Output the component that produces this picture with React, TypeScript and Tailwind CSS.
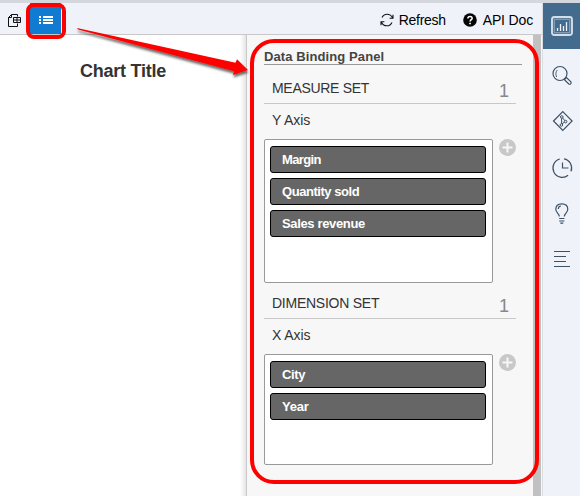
import React from 'react';

const font = "font-['Liberation_Sans',Arial,sans-serif]";

function Plus() {
  return (
    <svg width="17" height="17" viewBox="0 0 17 17" className="shrink-0">
      <circle cx="8.5" cy="8.5" r="8.5" fill="#c8c8c8" />
      <path d="M8.5 3.5v10M3.5 8.5h10" stroke="#f7f7f7" strokeWidth="2" />
    </svg>
  );
}

interface SetProps {
  title: string;
  titleClass: string;
  axis: string;
  items: { label: string; cls: string }[];
  boxClass: string;
}

function BindingSet({ title, titleClass, axis, items, boxClass }: SetProps) {
  return (
    <section className="w-[252px]">
      <div className="flex h-[31px] justify-between border-b border-[#c8c8c8] pl-2 pr-[7px]">
        <h3 className={`text-[14px] leading-[30px] text-[#333] ${titleClass}`}>{title}</h3>
        <span className="text-[18px] leading-[36px] text-[#888]">1</span>
      </div>
      <div className="h-[35px] pl-2 text-[14px] leading-[32px] tracking-[-0.1px] text-[#333]">{axis}</div>
      <div className="flex gap-[6px]">
        <div className={`flex w-[229px] flex-col gap-[5px] rounded-[2px] border border-[#999] bg-white pl-[5px] pt-1.5 ${boxClass}`}>
          {items.map((item) => (
            <div
              key={item.label}
              className={`h-[27px] w-[216px] rounded-[3px] border border-black bg-[#666] pl-[11px] text-[13px] font-bold leading-[26px] text-white ${item.cls}`}
            >
              {item.label}
            </div>
          ))}
        </div>
        <Plus />
      </div>
    </section>
  );
}

function Sidebar() {
  return (
    <aside className="flex w-[38px] shrink-0 flex-col border-l border-[#d9dde2] bg-[#eff3f9]">
      <div className="h-[46px] bg-[#426b8e]">
        <svg width="37" height="46" viewBox="543 3 37 46" fill="none">
          <rect x="552" y="17" width="20" height="18" rx="2.5" stroke="#d5dee7" strokeWidth="1.9" />
          <rect x="554.2" y="19.2" width="15.6" height="13.6" rx="1" stroke="#a9bccd" strokeWidth="0.9" />
          <path d="M557.5 31v-3M560.5 31v-7M563.5 31v-5M566.5 31v-9" stroke="#eff3f9" strokeWidth="1.3" />
        </svg>
      </div>
      <svg width="37" height="447" viewBox="543 49 37 447" fill="none" stroke="#3d5064" strokeWidth="1.2">
        <circle cx="560" cy="73.5" r="7" />
        <path d="M556.6 77c-1.4-3-.7-5.5.8-7" strokeWidth="0.9" />
        <path d="m565.2 78.8 1.3-1.2 4.4 4.2c.8 1.6-.6 3-2.1 2.2l-4.4-4.3z" />
        <path d="m562.8 111.7 9.3 9.3-9.3 9.3-9.3-9.3z" />
        <g strokeWidth="1">
          <circle cx="561.8" cy="117" r="1.3" />
          <circle cx="565.6" cy="121.6" r="1.3" />
          <circle cx="561.4" cy="125" r="1.3" />
          <path d="M561.6 118.3v5.4M562.6 118l2.2 2.6M562 124l2.5-2" />
        </g>
        <path d="M559.8 159a9.3 9.3 0 1 0 8.3 16.2M564 158.8a9.3 9.3 0 0 1 7 12.6" />
        <path d="M562.5 162.5v5.5h6" />
        <path d="M559.3 216.5c0-3.2-3.5-3.8-3.5-7.3 0-3.4 2.6-5.4 6-5.4s6 2 6 5.4c0 3.5-3.5 4.1-3.5 7.3M558.3 209c0-1.7.9-2.8 2.6-3M559.2 218.5h5.2M559.2 221h5.2M560.3 223.2h3" />
        <path d="M554 251.5h16M554 256.5h12M554 261.5h12M554 266.5h16" />
      </svg>
    </aside>
  );
}

export default function App() {
  return (
    <div className={`relative flex h-[496px] w-[580px] flex-col overflow-hidden bg-white ${font}`}>
      <div className="h-[3px] shrink-0 bg-[#d4d8de]" />
      <div className="flex h-[493px]">
        <main className="flex w-[542px] flex-col">
          <header className="flex h-8 shrink-0 border-b border-[#c8c8c8] bg-[#eff3f9] text-[14px] text-black">
            <svg width="30" height="31" viewBox="0 3 30 31" fill="none" stroke="#111" className="shrink-0">
              <path d="M17.5 16.5v-2h-6l-3 3v9h9v-3M11.5 14.5v3h-3" strokeWidth="1" />
              <path d="M13.5 17.5h7v5h-7zM13.5 20h7M17 17.5v5" strokeWidth="1" />
            </svg>
            <button className="h-[31px] w-[31px] bg-[#107bd1]">
              <svg width="31" height="31" viewBox="30 3 31 31" fill="white">
                <path d="M39 16h2v2h-2zM43 16h10v2H43zM39 19h2v2h-2zM43 19h10v2H43zM39 22h2v2h-2zM43 22h10v2H43z" />
              </svg>
            </button>
            <div className="ml-auto flex items-center pr-[9px] pt-[3px]">
              <svg width="14" height="14" viewBox="0 0 14 14" fill="none" stroke="#111" strokeWidth="1.1" className="mr-[5px]">
                <path d="M2 4.6C3.1 2.3 4.8 1.2 7 1.2c2.5 0 4.5 1.4 5.5 3.6M12 9.4c-1.1 2.3-2.8 3.4-5 3.4-2.5 0-4.5-1.4-5.5-3.6M13 1.8v3.4H9.6M1 12.2V8.8h3.4" />
              </svg>
              <span className="tracking-[-0.3px]">Refresh</span>
              <svg width="14" height="14" viewBox="0 0 14 14" className="ml-[17px] mr-[6px]">
                <circle cx="7" cy="7" r="6.8" fill="#050505" />
                <path d="M4.9 5.4c0-2.7 4.3-2.5 4.2 0C9 6.7 7.2 6.8 7.1 8.5" fill="none" stroke="white" strokeWidth="1.6" />
                <path d="M6.2 9.7h1.7v1.6H6.2z" fill="white" />
              </svg>
              <span className="tracking-[-0.15px]">API Doc</span>
            </div>
          </header>
          <div className="flex h-[461px]">
            <section className="w-[240px] pl-20 pt-[24px]">
              <h1 className="whitespace-nowrap text-[18px] font-bold leading-6 tracking-[-0.25px] text-[#333]">Chart Title</h1>
            </section>
            <div className="w-[6px] bg-gradient-to-r from-white to-[#e5e5e5]" />
            <section className="flex-1 border-l border-[#c8c8c8] bg-[#f7f7f7] pl-[17px] pt-[13px]">
              <h2 className="h-[17px] w-[258px] border-b border-[#999] text-[13px] font-bold leading-[17px] tracking-[0.1px] text-[#444]">Data Binding Panel</h2>
              <div className="flex flex-col gap-[5px] pt-[8px]">
                <BindingSet
                  title="MEASURE SET"
                  titleClass="tracking-[-0.3px]"
                  axis="Y Axis"
                  boxClass="h-[144px]"
                  items={[
                    { label: 'Margin', cls: 'tracking-[-0.65px]' },
                    { label: 'Quantity sold', cls: 'tracking-[-0.45px]' },
                    { label: 'Sales revenue', cls: 'tracking-[-0.35px]' },
                  ]}
                />
                <BindingSet
                  title="DIMENSION SET"
                  titleClass="tracking-[-0.25px]"
                  axis="X Axis"
                  boxClass="h-[111px]"
                  items={[
                    { label: 'City', cls: 'tracking-[-0.4px]' },
                    { label: 'Year', cls: 'tracking-[-0.25px]' },
                  ]}
                />
              </div>
            </section>
            <div className="w-2 bg-[#c1c1c1]" />
            <div className="w-px bg-[#f7f7f7]" />
          </div>
        </main>
        <Sidebar />
      </div>
      <svg className="pointer-events-none absolute inset-0" width="580" height="496" viewBox="0 0 580 496" fill="none">
        <defs>
          <filter id="arrow-shadow" x="-10%" y="-20%" width="120%" height="150%">
            <feDropShadow dx="0.5" dy="2.5" stdDeviation="1.1" floodColor="#000" floodOpacity="0.6" />
          </filter>
        </defs>
        <rect x="28" y="5" width="36" height="32" rx="6" stroke="red" strokeWidth="4" />
        <rect x="252" y="41" width="285" height="441" rx="22" stroke="red" strokeWidth="4" />
        <path d="M77 28 235.5 62.7 237 59.3 248 70 233 75 234 71.3 78 29.5z" fill="red" filter="url(#arrow-shadow)" />
      </svg>
    </div>
  );
}
